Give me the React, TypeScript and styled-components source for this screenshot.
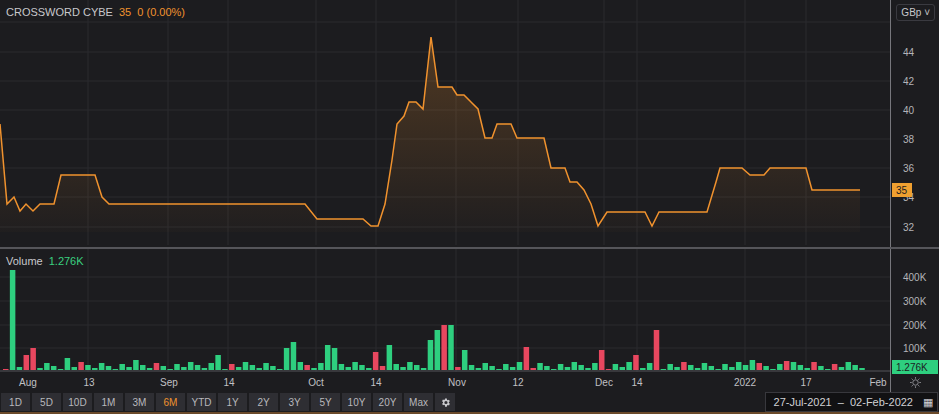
import React from "react";
import styled, { createGlobalStyle } from "styled-components";

const G = createGlobalStyle`
  body{margin:0;background:#1c1c1f;font-family:"Liberation Sans",Arial,sans-serif;}
`;
const Root = styled.div`width:939px;height:414px;display:flex;flex-direction:column;background:#1c1c1f;overflow:hidden;`;
const Panel = styled.div<{h:number}>`display:flex;height:${p=>p.h}px;border-bottom:${p=>p.h===247?"2px solid #55555a":"none"};`;
const Plot = styled.div`position:relative;width:890px;height:100%;border-right:1px solid #77777c;`;
const Axis = styled.div`position:relative;flex:1;`;
const Tick = styled.div`position:absolute;left:12px;font-size:10px;color:#b4b4b8;transform:translateY(-50%);`;
const Header = styled.div`position:absolute;left:6px;top:6px;font-size:11px;display:flex;gap:6px;color:#c8c8cc;`;
const Orange = styled.span`color:#f0922e;`;
const Green = styled.span`color:#3ad07f;`;
const Unit = styled.div`position:absolute;right:4px;top:4px;border:1px solid #3a3a40;border-radius:3px;color:#c8c8cc;font-size:10px;padding:2px 4px;`;
const Tag = styled.div<{bg:string;c:string}>`position:absolute;left:1px;width:${p=>p.bg==="#f0a030"?"16px":"42px"};height:14px;background:${p=>p.bg};color:${p=>p.c};font-size:10px;display:flex;align-items:center;padding-left:4px;transform:translateY(-50%);overflow:hidden;`;
const XRow = styled.div`display:flex;height:22px;`;
const XLabels = styled.div`position:relative;width:890px;border-right:1px solid #77777c;`;
const XL = styled.div`position:absolute;top:5px;font-size:10px;color:#c0c0c4;transform:translateX(-50%);`;
const Gear = styled.div`flex:1;display:flex;align-items:center;justify-content:center;color:#888;`;
const Bar = styled.div`display:flex;align-items:center;height:22px;padding:0 1px;gap:2px;`;
const Btn = styled.div<{active?:boolean;w:number}>`width:${p=>p.w}px;height:18px;background:#2e2e33;color:${p=>p.active?"#f0922e":"#b8b8bc"};font-size:10px;display:flex;align-items:center;justify-content:center;`;
const DateBox = styled.div`margin-left:auto;height:18px;background:#111113;border:1px solid #38383d;color:#d0d0d4;font-size:11px;display:flex;align-items:center;gap:10px;padding:0 4px 0 8px;`;
const Foot = styled.div`height:2px;background:#6b4a2a;margin-top:auto;`;

const price: [number,number][] = [[0,124],[7,204],[14,197],[20,211],[26,204],[33,211],[40,204],[54,204],[61,175],[95,175],[102,197],[109,204],[305,204],[317,219],[363,219],[371,226],[378,226],[385,204],[392,160],[397,124],[404,116],[409,102],[416,102],[423,109],[431,37],[438,87],[452,87],[457,95],[464,95],[471,102],[478,109],[485,138],[492,138],[497,124],[511,124],[517,138],[544,138],[551,168],[565,168],[570,182],[577,182],[584,190],[591,204],[598,226],[607,212],[645,212],[652,226],[659,212],[707,212],[716,182],[720,168],[742,168],[750,175],[764,175],[770,168],[806,168],[812,190],[860,190]];
const line = price.map((p,i)=>(i?"L":"M")+p[0]+" "+p[1]).join(" ");
const area = line+" L860 232 L0 232 Z";
const pticks=[[44,52],[42,81],[40,110],[38,139],[36,168],[34,197],[32,227]];
const gx=[88,168,228,316,376,456,518,604,637,745,806];

const big: Record<number,[number,boolean]> = {1:[100,false],3:[15,true],4:[22,true],9:[12,false],19:[10,false],31:[15,false],41:[22,false],42:[28,false],47:[25,false],48:[22,false],54:[18,true],56:[25,false],62:[30,false],63:[40,false],64:[45,true],65:[45,false],67:[20,false],76:[23,true],87:[20,true],92:[15,true],95:[40,true],118:[8,true],109:[10,false],114:[9,true]};
const bars = Array.from({length:126},(_,i)=>{
  const b=big[i]; const h=b?b[0]:1+((i*37)%8);
  const red=b?b[1]:(i*13)%11===0;
  return {x:i*6.85+3,h,red};
});

const btns=["1D","5D","10D","1M","3M","6M","YTD","1Y","2Y","3Y","5Y","10Y","20Y","Max"];

export default function App(){
  return <Root><G/>
    <Panel h={247}>
      <Plot>
        <svg width="890" height="245">
          <defs><linearGradient id="g" x1="0" y1="0" x2="0" y2="1"><stop offset="0" stopColor="#f0922e" stopOpacity="0.25"/><stop offset="1" stopColor="#f0922e" stopOpacity="0.02"/></linearGradient></defs>
          {[22,...pticks.map(t=>t[1])].map(y=><line key={y} x1="0" x2="890" y1={y} y2={y} stroke="#2a2a2f"/>)}
          {gx.map(x=><line key={x} x1={x} x2={x} y1="0" y2="245" stroke="#2a2a2f"/>)}
          <path d={area} fill="url(#g)"/>
          <path d={line} fill="none" stroke="#f0922e" strokeWidth="1.5"/>
        </svg>
        <Header>CROSSWORD CYBE <Orange>35&nbsp; 0 (0.00%)</Orange></Header>
      </Plot>
      <Axis>
        <Unit>GBp ˅</Unit>
        {pticks.map(t=><Tick key={t[0]} style={{top:t[1]}}>{t[0]}</Tick>)}
        <Tag bg="#f0a030" c="#1c1c1f" style={{top:190}}>35</Tag>
      </Axis>
    </Panel>
    <Panel h={123}>
      <Plot>
        <svg width="890" height="123">
          {[28,52,76,99].map(y=><line key={y} x1="0" x2="890" y1={y} y2={y} stroke="#2a2a2f"/>)}
          {gx.map(x=><line key={x} x1={x} x2={x} y1="0" y2="123" stroke="#2a2a2f"/>)}
          {bars.map((b,i)=><rect key={i} x={b.x} y={121-b.h} width="5.5" height={b.h} fill={b.red?"#e8475f":"#2ecf7f"}/>)}
          <line x1="0" x2="890" y1="122" y2="122" stroke="#55555a"/>
        </svg>
        <Header>Volume <Green>1.276K</Green></Header>
      </Plot>
      <Axis>
        {[["400K",28],["300K",52],["200K",76],["100K",99]].map(t=><Tick key={t[0]} style={{top:t[1] as number}}>{t[0]}</Tick>)}
        <Tag bg="#2ecf7f" c="#1c1c1f" style={{top:118}}>1.276K</Tag>
      </Axis>
    </Panel>
    <XRow>
      <XLabels>
        {[["Aug",28],["13",89],["Sep",169],["14",229],["Oct",316],["14",376],["Nov",457],["12",518],["Dec",604],["14",637],["2022",745],["17",806],["Feb",878]].map((l,i)=><XL key={i} style={{left:l[1] as number}}>{l[0]}</XL>)}
      </XLabels>
      <Gear><svg width="13" height="13" viewBox="0 0 24 24" fill="none" stroke="#8a8a90" strokeWidth="1.8"><circle cx="12" cy="12" r="5"/><path d="M12 2v3M12 19v3M2 12h3M19 12h3M4.9 4.9l2.1 2.1M17 17l2.1 2.1M4.9 19.1L7 17M17 7l2.1-2.1"/></svg></Gear>
    </XRow>
    <Bar>
      {btns.map(b=><Btn key={b} w={29} active={b==="6M"}>{b}</Btn>)}
      <Btn w={20}><svg width="11" height="11" viewBox="0 0 24 24" fill="#c8c8cc"><path d="M19.4 13a7.5 7.5 0 000-2l2.1-1.6-2-3.5-2.5 1a7.6 7.6 0 00-1.7-1L15 3h-4l-.4 2.7a7.6 7.6 0 00-1.7 1l-2.5-1-2 3.5L6.6 11a7.5 7.5 0 000 2l-2.1 1.6 2 3.5 2.5-1a7.6 7.6 0 001.7 1L11 21h4l.4-2.7a7.6 7.6 0 001.7-1l2.5 1 2-3.5zM13 15.5a3.5 3.5 0 110-7 3.5 3.5 0 010 7z"/></svg></Btn>
      <DateBox>27-Jul-2021 &nbsp;– &nbsp;02-Feb-2022 <span>▦</span></DateBox>
    </Bar>
    <Foot/>
  </Root>;
}
